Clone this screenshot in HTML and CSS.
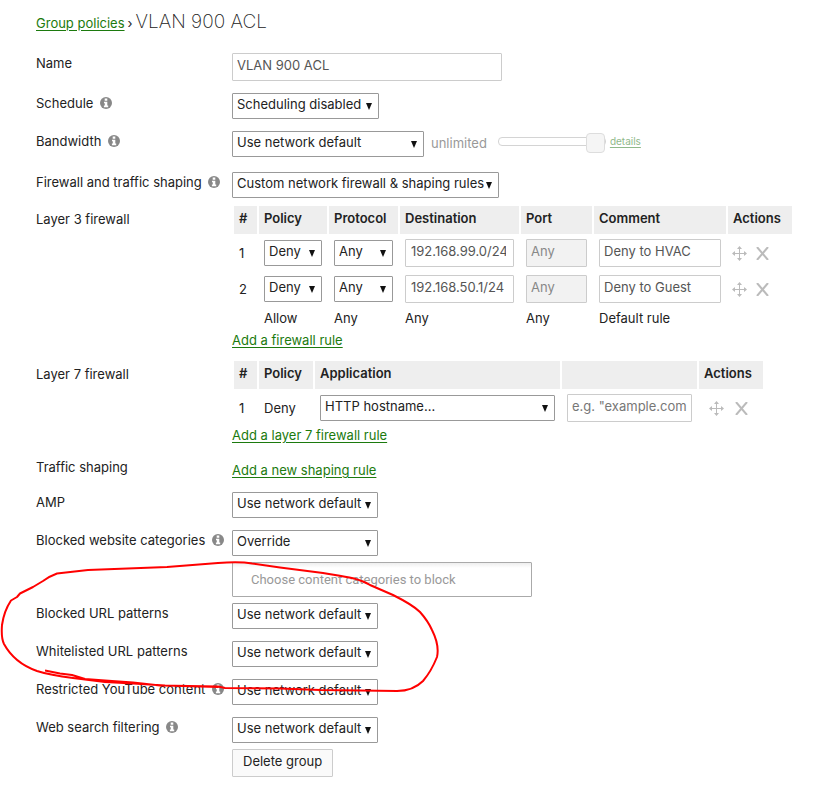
FILE: index.html
```html
<!DOCTYPE html>
<html lang="en">
<head>
    <meta charset="UTF-8">
    <meta name="viewport" content="width=device-width, initial-scale=1.0">
    <title>Group policies - VLAN 900 ACL</title>
    <link rel="stylesheet" href="styles.css">
</head>
<body>
    <svg class="defs" width="0" height="0" aria-hidden="true">
        <symbol id="info" viewBox="0 0 12 12">
            <circle cx="6" cy="6" r="6" fill="#888"/>
            <path d="M4.700 1.500h2.600v2.200H4.700zM4 4.700h3.300v3.800h.9V10.200H3.900V8.500h.9V6.300H4z" fill="#fff"/>
        </symbol>
        <symbol id="move" viewBox="0 0 15 15">
            <path d="M7.500 1.500v12M1.500 7.500h12" fill="none" stroke="#bbb"/>
            <path d="M7.500 0 10 3H5zM7.500 15 5 12h5zM0 7.500 3 5v5zM15 7.500 12 10V5z" fill="#bbb"/>
        </symbol>
        <symbol id="remove" viewBox="0 0 13 13">
            <path d="M1 0 12 13M12 0 1 13" fill="none" stroke="#bbb" stroke-width="2"/>
        </symbol>
    </svg>

    <main class="page">
        <header class="page-title">
            <a href="#">Group policies</a>
            <span class="crumb">›</span>
            <h1>VLAN 900 ACL</h1>
        </header>

        <form class="settings">
            <div class="row">
                <label for="name">Name</label>
                <div><input type="text" id="name" class="name" value="VLAN 900 ACL"></div>
            </div>
            <div class="row">
                <label for="schedule">Schedule <svg class="info"><use href="#info"/></svg></label>
                <div><select id="schedule" class="w-schedule"><option>Scheduling disabled</option></select></div>
            </div>
            <div class="row">
                <label for="bandwidth">Bandwidth <svg class="info"><use href="#info"/></svg></label>
                <div class="bandwidth">
                    <select id="bandwidth" class="w-bandwidth"><option>Use network default</option></select>
                    <span class="limit">unlimited</span>
                    <input type="range" class="slider" min="0" max="100" value="100" aria-label="Bandwidth limit" disabled>
                    <a href="#" class="details">details</a>
                </div>
            </div>
            <div class="row tight">
                <label for="firewall">Firewall and traffic shaping <svg class="info"><use href="#info"/></svg></label>
                <div><select id="firewall" class="w-firewall"><option>Custom network firewall &amp; shaping rules</option></select></div>
            </div>

            <!-- Layer 3 -->
            <div class="row rules">
                <span class="label">Layer 3 firewall</span>
                <div>
                    <table class="layer3">
                        <colgroup>
                            <col class="c-num"><col class="c-policy"><col class="c-protocol"><col class="c-dest"><col class="c-port"><col class="c-comment"><col class="c-actions">
                        </colgroup>
                        <thead>
                            <tr><th>#</th><th>Policy</th><th>Protocol</th><th>Destination</th><th>Port</th><th>Comment</th><th>Actions</th></tr>
                        </thead>
                        <tbody>
                            <tr>
                                <td>1</td>
                                <td><select aria-label="Policy"><option>Deny</option></select></td>
                                <td><select aria-label="Protocol"><option>Any</option></select></td>
                                <td class="dest"><input type="text" aria-label="Destination" value="192.168.99.0/24"></td>
                                <td><input type="text" aria-label="Port" value="Any" disabled></td>
                                <td><input type="text" aria-label="Comment" value="Deny to HVAC"></td>
                                <td>
                                    <div class="actions">
                                        <button type="button" aria-label="Move rule"><svg width="15" height="15"><use href="#move"/></svg></button>
                                        <button type="button" aria-label="Delete rule"><svg width="13" height="13"><use href="#remove"/></svg></button>
                                    </div>
                                </td>
                            </tr>
                            <tr>
                                <td>2</td>
                                <td><select aria-label="Policy"><option>Deny</option></select></td>
                                <td><select aria-label="Protocol"><option>Any</option></select></td>
                                <td class="dest"><input type="text" aria-label="Destination" value="192.168.50.1/24"></td>
                                <td><input type="text" aria-label="Port" value="Any" disabled></td>
                                <td><input type="text" aria-label="Comment" value="Deny to Guest"></td>
                                <td>
                                    <div class="actions">
                                        <button type="button" aria-label="Move rule"><svg width="15" height="15"><use href="#move"/></svg></button>
                                        <button type="button" aria-label="Delete rule"><svg width="13" height="13"><use href="#remove"/></svg></button>
                                    </div>
                                </td>
                            </tr>
                            <tr class="default-rule">
                                <td></td><td>Allow</td><td>Any</td><td>Any</td><td>Any</td><td>Default rule</td><td></td>
                            </tr>
                        </tbody>
                    </table>
                    <a href="#" class="add">Add a firewall rule</a>
                </div>
            </div>

            <!-- Layer 7 -->
            <div class="row rules">
                <span class="label">Layer 7 firewall</span>
                <div>
                    <table class="layer7">
                        <colgroup>
                            <col class="c-num"><col class="c-policy7"><col class="c-app"><col class="c-host"><col class="c-actions">
                        </colgroup>
                        <thead>
                            <tr><th>#</th><th>Policy</th><th>Application</th><th></th><th>Actions</th></tr>
                        </thead>
                        <tbody>
                            <tr>
                                <td>1</td>
                                <td>Deny</td>
                                <td><select aria-label="Application"><option>HTTP hostname...</option></select></td>
                                <td><input type="text" aria-label="Hostname" placeholder="e.g. &quot;example.com&quot;"></td>
                                <td>
                                    <div class="actions">
                                        <button type="button" aria-label="Move rule"><svg width="15" height="15"><use href="#move"/></svg></button>
                                        <button type="button" aria-label="Delete rule"><svg width="13" height="13"><use href="#remove"/></svg></button>
                                    </div>
                                </td>
                            </tr>
                        </tbody>
                    </table>
                    <a href="#" class="add">Add a layer 7 firewall rule</a>
                </div>
            </div>
            <div class="row shaping">
                <span class="label">Traffic shaping</span>
                <div><a href="#" class="add">Add a new shaping rule</a></div>
            </div>

            <div class="row">
                <label for="amp">AMP</label>
                <div><select id="amp"><option>Use network default</option></select></div>
            </div>
            <div class="row tight">
                <label for="categories">Blocked website categories <svg class="info"><use href="#info"/></svg></label>
                <div class="categories">
                    <select id="categories"><option>Override</option></select>
                    <input type="text" class="chooser" aria-label="Content categories" placeholder="Choose content categories to block">
                </div>
            </div>
            <div class="row">
                <label for="blocked">Blocked URL patterns</label>
                <div><select id="blocked"><option>Use network default</option></select></div>
            </div>
            <div class="row">
                <label for="whitelisted">Whitelisted URL patterns</label>
                <div><select id="whitelisted"><option>Use network default</option></select></div>
            </div>
            <div class="row">
                <label for="youtube">Restricted YouTube content <svg class="info"><use href="#info"/></svg></label>
                <div><select id="youtube"><option>Use network default</option></select></div>
            </div>
            <div class="row tight">
                <label for="search">Web search filtering <svg class="info"><use href="#info"/></svg></label>
                <div><select id="search"><option>Use network default</option></select></div>
            </div>
            <div class="row">
                <span></span>
                <div><button type="button" class="delete">Delete group</button></div>
            </div>
        </form>
    </main>

    <!-- hand-drawn marker around the URL pattern settings -->
    <svg class="marker" width="440" height="132" viewBox="0 561 440 132" aria-hidden="true">
        <path d="M45 670.500 60 673.500 72 675 85 679 105 680.500 133 682.500 160 685.500 218 686.500 225 688 280 688.500 320 690 360 690.500 397 691C408 691 417 687 423 681C429 674 433 667 437 657C439 648 437 640 432 630Q428 621 420 612Q413 605 393 595L370 585C357 577 340 576 323 573L280 567.500 252 563.500Q240 561.500 218 563L167 567 88 570 57 573.500Q50 576 43 581L33 587 20 593.500 17 597 11 600.500Q4 611 2 625Q1 638 4 644C10 655 20 665 37 671Q50 675 73 678L105 682 133 683.500 165 685.500 218 687"/>
    </svg>
</body>
</html>
```

FILE: styles.css
```css
* {
    box-sizing: border-box;
}
body {
    position: relative;
    margin: 0;
    background-color: #fff;
    color: #222;
    font-family: Inter, "Liberation Sans", sans-serif;
    font-size: 13px;
    line-height: 20px;
}
a {
    color: #1c7a0e;
    text-underline-offset: 2px;
}
.defs {
    position: absolute;
}
.page {
    padding: 8px 36px 16px;
}

/* Title */
.page-title {
    display: flex;
    align-items: baseline;
    gap: 3px;
    height: 45px;
}
.page-title h1 {
    margin: 0;
    font-size: 19px;
    font-weight: 200;
    line-height: 28px;
}

/* Form rows */
.row {
    display: grid;
    grid-template-columns: 196px 1fr;
    padding-bottom: 12px;
}
.row.tight {
    padding-bottom: 6px;
}
.row > div {
    display: flex;
    flex-direction: column;
    align-items: flex-start;
}
.row > label {
    white-space: nowrap;
}
.info {
    width: 12px;
    height: 12px;
    margin-left: 3px;
    vertical-align: -1px;
}

/* Controls */
input, select, button {
    font: inherit;
    color: inherit;
}
select {
    appearance: none;
    width: 146px;
    height: 26px;
    padding: 0 12px 4px 4px;
    border: 1px solid #999;
    border-radius: 1px;
    background: #fff url("data:image/svg+xml,%3Csvg xmlns='http://www.w3.org/2000/svg' width='6' height='7'%3E%3Cpath d='M0 0h6L3 7z' fill='%23111'/%3E%3C/svg%3E") no-repeat right 6px top 9px;
}
input[type="text"] {
    height: 28px;
    padding: 0 4px 4px;
    border: 1px solid #ccc;
    border-radius: 1px;
    background-color: #fff;
    color: #555;
}
input[type="text"]:disabled {
    background-color: #f2f2f2;
    color: #888;
}
input::placeholder {
    color: #777;
}
.name {
    width: 270px;
}
.w-schedule {
    width: 147px;
}
.w-bandwidth {
    width: 192px;
}
.w-firewall {
    width: 267px;
}

/* Bandwidth */
.row > .bandwidth {
    flex-direction: row;
    height: 29px;
}
.limit {
    margin-left: 7px;
    padding-top: 2px;
    color: #999;
}
.slider {
    appearance: none;
    width: 108px;
    height: 20px;
    margin: 0 4px 0 11px;
    background: none;
}
.slider::-webkit-slider-runnable-track {
    height: 9px;
    border: 1px solid #d4d4d4;
    border-radius: 4px;
}
.slider::-webkit-slider-thumb {
    appearance: none;
    width: 19px;
    height: 20px;
    margin-top: -5px;
    border: 1px solid #ddd;
    border-radius: 4px;
    background-color: #f5f5f5;
}
.details {
    color: #8fb98a;
    font-size: 10px;
}

/* Rule tables */
.rules .label {
    padding-top: 5px;
}
table {
    table-layout: fixed;
    border-spacing: 2px;
}
.layer3 {
    width: 562px;
}
.layer7 {
    width: 533px;
}
th {
    height: 28px;
    padding: 0 5px 4px;
    background-color: #eee;
    font-weight: 600;
    text-align: left;
}
td {
    height: 34px;
    padding: 0 5px;
}
td select, td input[type="text"] {
    display: block;
    width: 100%;
}
.dest input[type="text"] {
    padding-left: 5px;
    padding-right: 7px;
}
.default-rule td {
    height: 20px;
}
.c-num { width: 23px; }
.c-policy { width: 68px; }
.c-protocol { width: 69px; }
.c-dest { width: 119px; }
.c-port { width: 71px; }
.c-comment { width: 132px; }
.c-actions { width: 64px; }
.c-policy7 { width: 54px; }
.c-app { width: 245px; }
.c-host { width: 135px; }
.actions {
    display: flex;
    align-items: center;
    gap: 9px;
}
.layer3 .actions {
    margin-left: -1px;
}
.layer7 .actions {
    gap: 11px;
    padding-left: 5px;
}
.actions button {
    display: flex;
    padding: 0;
    border: 0;
    background: none;
}
.add {
    line-height: 16px;
}
.layer3 + .add {
    line-height: 20px;
    margin-bottom: -3px;
}
.layer7 + .add {
    margin-bottom: 2px;
}
.shaping .add {
    margin: 5px 0 2px;
}

/* Content categories */
.categories {
    gap: 6px;
}
.categories input.chooser {
    width: 300px;
    height: 35px;
    padding: 0 18px;
    border-color: #aaa;
    background-image: linear-gradient(#eee, #fff 15%);
    font-family: Roboto, sans-serif;
}
.chooser::placeholder {
    color: #999;
}
.delete {
    height: 28px;
    padding: 0 10px 4px;
    border: 1px solid #ccc;
    border-radius: 1px;
    background-color: #fafafa;
}

.marker {
    position: absolute;
    top: 561px;
    left: 0;
    pointer-events: none;
}
.marker path {
    fill: none;
    stroke: #f00;
    stroke-width: 2;
    stroke-linejoin: round;
}
```
